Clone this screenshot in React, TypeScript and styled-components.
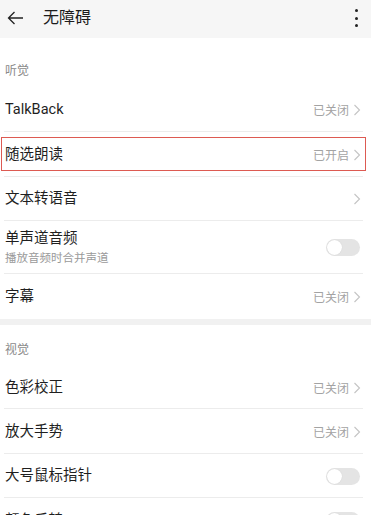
import React from "react";
import styled, { createGlobalStyle } from "styled-components";

const Global = createGlobalStyle`
  html, body { margin: 0; padding: 0; background: #ffffff; }
  body { font-family: Roboto, "Noto Sans CJK SC", sans-serif; -webkit-font-smoothing: antialiased; }
  * { box-sizing: border-box; }
`;

const Page = styled.div`
  width: 371px;
  background: #ffffff;
  display: flex;
  flex-direction: column;
`;

const Header = styled.div`
  height: 38px;
  background: #f6f6f6;
  display: flex;
  align-items: center;
  padding: 0 8px 2px 6px;
`;

const BackBtn = styled.div`
  width: 18px;
  height: 18px;
  display: flex;
  align-items: center;
  justify-content: center;
  margin-right: 19px;
`;

const Title = styled.div`
  flex: 1;
  font-size: 16px;
  color: #1c1c1c;
  line-height: 20px;
`;

const Dots = styled.div`
  display: flex;
  flex-direction: column;
  gap: 4.5px;
  margin-right: 5px;
`;

const Dot = styled.span`
  width: 3px;
  height: 3px;
  border-radius: 50%;
  background: #222;
`;

const SectionLabel = styled.div<{ $pt: number }>`
  padding: ${(p) => p.$pt}px 5px 8px;
  font-size: 12px;
  line-height: 16px;
  color: #8a8a8a;
`;

const Row = styled.div<{ $h?: number; $divider?: boolean; $marked?: boolean }>`
  position: relative;
  height: ${(p) => p.$h ?? 45}px;
  display: flex;
  align-items: center;
  padding: 0 9px 0 5px;
  &::before {
    content: "";
    display: ${(p) => (p.$divider ? "block" : "none")};
    position: absolute;
    left: 4px;
    right: 8px;
    bottom: 0;
    height: 1px;
    background: #ececec;
  }
  &::after {
    content: "";
    display: ${(p) => (p.$marked ? "block" : "none")};
    position: absolute;
    left: 1px;
    right: 5px;
    top: 5px;
    bottom: 6px;
    border: 1.5px solid #dd5a52;
  }
`;

const TextCol = styled.div`
  flex: 1;
  display: flex;
  flex-direction: column;
`;

const RowTitle = styled.div`
  font-size: 14.5px;
  line-height: 20px;
  color: #1f1f1f;
`;

const RowSub = styled.div`
  font-size: 11.5px;
  line-height: 16px;
  color: #9a9a9a;
  margin-top: 1px;
`;

const Status = styled.span`
  font-size: 12px;
  color: #a3a3a3;
  margin-right: 4px;
`;

const Chevron = styled.svg`
  width: 8px;
  height: 12px;
  margin-right: 1px;
`;

const Toggle = styled.div`
  width: 34px;
  height: 17px;
  border-radius: 9px;
  background: #e4e4e4;
  display: flex;
  align-items: center;
  padding: 1px;
  margin-right: 2px;
`;

const Knob = styled.span`
  width: 15px;
  height: 15px;
  border-radius: 50%;
  background: #ffffff;
  box-shadow: 0 0 1px rgba(0, 0, 0, 0.15);
`;

const Band = styled.div`
  height: 6px;
  background: #f1f1f1;
`;

const ChevronIcon = () => (
  <Chevron viewBox="0 0 8 12">
    <path d="M1.5 1 L6.5 6 L1.5 11" fill="none" stroke="#c4c4c4" strokeWidth="1.1" />
  </Chevron>
);

type Item = {
  title: string;
  sub?: string;
  status?: string;
  chevron?: boolean;
  toggle?: boolean;
  divider?: boolean;
  marked?: boolean;
  h?: number;
};

const hearing: Item[] = [
  { title: "TalkBack", status: "已关闭", chevron: true, divider: true },
  { title: "随选朗读", status: "已开启", chevron: true, divider: true, marked: true },
  { title: "文本转语音", chevron: true, divider: true, h: 44 },
  { title: "单声道音频", sub: "播放音频时合并声道", toggle: true, divider: true, h: 53 },
  { title: "字幕", status: "已关闭", chevron: true },
];

const vision: Item[] = [
  { title: "色彩校正", status: "已关闭", chevron: true, divider: true, h: 43 },
  { title: "放大手势", status: "已关闭", chevron: true, divider: true },
  { title: "大号鼠标指针", toggle: true, divider: true, h: 44 },
  { title: "颜色反转", toggle: true, divider: true },
];

const SettingRow = ({ item }: { item: Item }) => (
  <Row $h={item.h} $divider={item.divider} $marked={item.marked}>
    <TextCol>
      <RowTitle>{item.title}</RowTitle>
      {item.sub && <RowSub>{item.sub}</RowSub>}
    </TextCol>
    {item.status && <Status>{item.status}</Status>}
    {item.chevron && <ChevronIcon />}
    {item.toggle && (
      <Toggle>
        <Knob />
      </Toggle>
    )}
  </Row>
);

export default function App() {
  return (
    <Page>
      <Global />
      <Header>
        <BackBtn>
          <svg width="17" height="14" viewBox="0 0 17 14">
            <path d="M16 7 H1.5 M7.5 1 L1.5 7 L7.5 13" fill="none" stroke="#222" strokeWidth="1.3" />
          </svg>
        </BackBtn>
        <Title>无障碍</Title>
        <Dots>
          <Dot />
          <Dot />
          <Dot />
        </Dots>
      </Header>
      <SectionLabel $pt={25}>听觉</SectionLabel>
      {hearing.map((it) => (
        <SettingRow key={it.title} item={it} />
      ))}
      <Band />
      <SectionLabel $pt={17}>视觉</SectionLabel>
      {vision.map((it) => (
        <SettingRow key={it.title} item={it} />
      ))}
    </Page>
  );
}
